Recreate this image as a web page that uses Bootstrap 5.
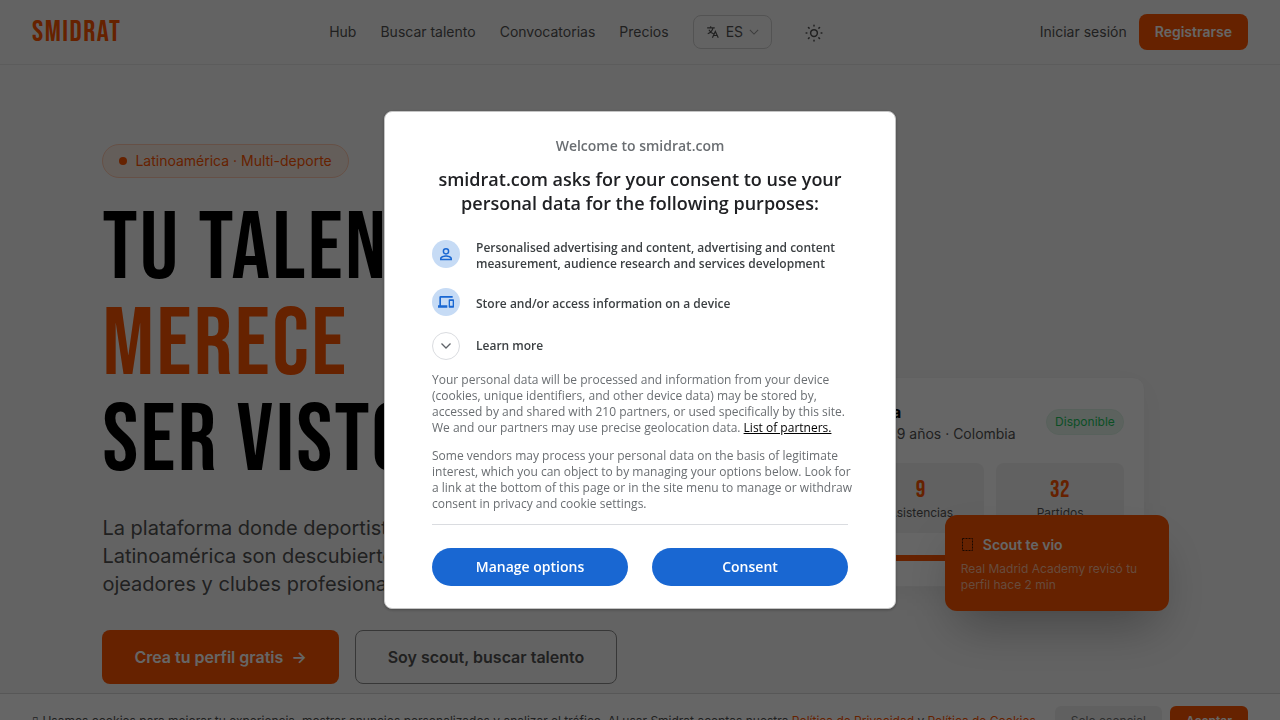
<!DOCTYPE html>
<html lang="es">
<head>
<meta charset="utf-8">
<meta name="viewport" content="width=device-width, initial-scale=1">
<title>Smidrat</title>
<link href="https://cdn.jsdelivr.net/npm/bootstrap@5.3.0/dist/css/bootstrap.min.css" rel="stylesheet">
<style>
:root { --accent: #ff5500; --ink: #525252; }
body { font-family: Inter, sans-serif; font-size: 14px; line-height: 20px; background: #f8f8f8; color: var(--ink); height: 100vh; overflow: hidden; }
a { text-decoration: none; }
.display-type { font-family: "Bebas Neue", "Roboto Condensed", "Liberation Sans Narrow", sans-serif; font-weight: 400; letter-spacing: .025em; }
.site-header { height: 65px; border-bottom: 1px solid #e5e5e5; }
.site-header a { color: var(--ink); }
.site-header .brand { color: var(--accent); font-size: 30px; line-height: 36px; letter-spacing: .05em; }
.btn-accent, .site-header .btn-accent { background: var(--accent); color: #fff; font-weight: 600; border: 0; border-radius: 8px; }
.btn-signup { height: 36px; padding: 8px 16px; font-size: 14px; line-height: 20px; }
.lang-btn { height: 34px; border: 1px solid #cfcfcf; border-radius: 8px; background: transparent; color: var(--ink); padding: 0 12px; gap: 6px; }
.theme-btn { width: 36px; height: 36px; border: 0; background: transparent; color: var(--ink); }
.hero { padding: 79px 8% 0; }
.hero-copy { padding-bottom: 136px; }
.tag-pill { height: 34px; padding: 0 16px; border: 1px solid #ffc9ae; border-radius: 17px; background: #faeae2; color: var(--accent); }
.tag-dot { width: 8px; height: 8px; border-radius: 50%; background: var(--accent); }
.hero h1 { font-size: 96px; line-height: 96px; color: #000; margin: 24px 0 0; white-space: nowrap; }
.hero h1 span { color: var(--accent); }
.hero-lead { font-size: 20px; line-height: 28px; max-width: 430px; margin: 24px 0 32px; }
.btn-hero { height: 54px; padding: 0 32px; font-size: 16px; font-weight: 600; border-radius: 8px; white-space: nowrap; }
.btn-scout { border: 1px solid #8a8a8a; color: var(--ink); background: transparent; }
.profile-card { width: 448px; background: #fff; border: 1px solid #f2f2f2; border-radius: 12px; padding: 20px 20px 25px; box-shadow: 0 8px 30px rgba(0,0,0,.05); }
.card-head { height: 48px; gap: 12px; margin-bottom: 17px; }
.avatar-disc { width: 48px; height: 48px; border-radius: 50%; background: #ffe0cf; }
.player-name { font-size: 16px; line-height: 24px; font-weight: 700; color: #000; }
.status-pill { font-size: 12px; line-height: 16px; color: #22c55e; background: #e6f5ec; border: 1px solid #dcf3e5; border-radius: 13px; padding: 4px 8px; }
.stat-row { gap: 12px; }
.stat-tile { flex: 1 1 0; background: #f2f2f2; border-radius: 8px; height: 70px; padding-top: 12px; font-size: 12px; line-height: 16px; }
.stat-tile strong { display: block; font-size: 24px; line-height: 30px; color: var(--accent); }
.profile-card .progress { height: 6px; margin-top: 22px; --bs-progress-bg: #eee; --bs-progress-bar-bg: #ff5500; }
.scout-note { right: -25px; bottom: -25px; width: 224px; height: 96px; padding: 20px 16px 16px; background: var(--accent); border-radius: 12px; color: #fff; box-shadow: 0 25px 50px -12px rgba(0,0,0,.3); }
.scout-note p { font-size: 12px; line-height: 16px; color: #ffbb99; margin: 6px 0 0; }
.cookie-bar { bottom: -28px; background: #fff; border-top: 1px solid #d9d9d9; padding: 12px 32px; font-size: 12px; line-height: 16px; color: var(--ink); white-space: nowrap; }
.cookie-bar a { color: var(--accent); }
.cookie-bar button { height: 30px; border: 0; border-radius: 6px; padding: 0 16px; font-size: 12px; }
.btn-essential { background: #f0f0f0; color: #737373; }
.scrim { background: rgba(0,0,0,.6); z-index: 1040; font-family: "Open Sans", sans-serif; }
.consent-box { width: 512px; background: #fff; border: 1px solid #c4c4c4; border-radius: 8px; padding: 24px 47px 22px; color: #3c4043; box-shadow: 0 1px 3px rgba(0,0,0,.3); }
.consent-site { font-size: 14px; line-height: 20px; font-weight: 600; color: #6a6e72; }
.consent-box h2 { font-size: 18px; line-height: 24px; font-weight: 600; color: #202124; margin: 11px 0 25px; }
.purpose { font-size: 12px; line-height: 16px; font-weight: 600; }
.purpose-icon { width: 28px; height: 28px; flex: none; border-radius: 50%; background: #c6dbf5; color: #1967d2; }
.more-btn { border: 0; background: transparent; padding: 0; color: inherit; }
.more-btn .purpose-icon { background: #fff; border: 1px solid #dadce0; color: #5f6368; }
.legal { font-size: 12px; line-height: 16px; color: #6a6e72; border-bottom: 1px solid #dadce0; margin-bottom: 23px; }
.legal p { margin-right: -8px; }
.legal a { color: #000; text-decoration: underline; }
.btn-consent { height: 38px; border: 0; border-radius: 19px; background: #1967d2; color: #fff; font-size: 14px; font-weight: 600; flex: 1; }
</style>
</head>
<body>
<header class="site-header d-flex align-items-center justify-content-between px-4">
  <a href="#" class="brand display-type ms-2">SMIDRAT</a>
  <nav class="d-flex align-items-center gap-4">
    <a href="#">Hub</a>
    <a href="#">Buscar talento</a>
    <a href="#">Convocatorias</a>
    <a href="#">Precios</a>
    <button type="button" class="lang-btn d-flex align-items-center">
      <svg width="14" height="14" viewBox="0 0 24 24" fill="none" stroke="currentColor" stroke-width="2" aria-hidden="true"><path d="M2 5h13M8 2v3M3 15C8 13 11 10 12 5M5 8c2 4 5 6 8 7M11 22l5-11 5 11M13 18h7"/></svg>
      ES
      <svg width="10" height="10" viewBox="0 0 12 12" fill="none" stroke="#999" stroke-width="1.3" aria-hidden="true"><path d="M1 3.5l5 5 5-5"/></svg>
    </button>
    <button type="button" class="theme-btn p-0" aria-label="Cambiar tema">
      <svg width="18" height="18" viewBox="0 0 24 24" fill="none" stroke="currentColor" stroke-width="2" stroke-linecap="round" aria-hidden="true"><circle cx="12" cy="12" r="4.5"/><path d="M12 1.5v1M12 21.5v1M1.5 12h1M21.5 12h1M4.600 4.600L5.500 5.500M18.500 18.500l.9.9M4.600 19.400l.9-.9M18.500 5.500l.9-.9"/></svg>
    </button>
  </nav>
  <div class="d-flex align-items-center me-2">
    <a href="#" class="me-2 pe-1">Iniciar sesión</a>
    <a href="#" class="btn-accent btn-signup">Registrarse</a>
  </div>
</header>

<main class="hero">
  <div class="row align-items-center gx-5">
    <section class="col-6 hero-copy">
      <div class="tag-pill d-inline-flex align-items-center gap-2"><span class="tag-dot"></span>Latinoamérica · Multi-deporte</div>
      <h1 class="display-type">TU TALENTO<br><span>MERECE</span><br>SER VISTO</h1>
      <p class="hero-lead">La plataforma donde deportistas de Latinoamérica son descubiertos por ojeadores y clubes profesionales.</p>
      <div class="d-flex gap-3">
        <button type="button" class="btn-accent btn-hero">Crea tu perfil gratis&nbsp; →</button>
        <button type="button" class="btn-hero btn-scout">Soy scout, buscar talento</button>
      </div>
    </section>
    <section class="col-6 d-flex justify-content-center">
      <div class="profile-card position-relative">
        <div class="card-head d-flex align-items-center">
          <span class="avatar-disc"></span>
          <div class="flex-grow-1">
            <div class="player-name">Santiago García</div>
            <div>Mediocampista · 19 años · Colombia</div>
          </div>
          <span class="status-pill">Disponible</span>
        </div>
        <div class="stat-row d-flex text-center">
          <div class="stat-tile"><strong class="display-type">14</strong>Goles</div>
          <div class="stat-tile"><strong class="display-type">9</strong>Asistencias</div>
          <div class="stat-tile"><strong class="display-type">32</strong>Partidos</div>
        </div>
        <div class="progress"><div class="progress-bar w-75"></div></div>
        <aside class="scout-note position-absolute">
          <div class="d-flex align-items-center fw-semibold">
            <svg class="me-2" width="14" height="16" viewBox="0 0 14 16" fill="none" stroke="#401500" aria-hidden="true"><rect x="1.5" y="1.5" width="10" height="12" stroke-dasharray="2 1"/></svg>Scout te vio
          </div>
          <p>Real Madrid Academy revisó tu perfil hace 2 min</p>
        </aside>
      </div>
    </section>
  </div>
</main>

<div class="cookie-bar position-fixed start-0 end-0 d-flex align-items-center">
  <div class="flex-grow-1">▯ Usamos cookies para mejorar tu experiencia, mostrar anuncios personalizados y analizar el tráfico. Al usar Smidrat aceptas nuestra <a href="#">Política de Privacidad</a> y <a href="#">Política de Cookies</a>.</div>
  <button type="button" class="btn-essential me-2">Solo esencial</button>
  <button type="button" class="btn-accent">Aceptar</button>
</div>

<div class="scrim position-fixed top-0 start-0 w-100 h-100 d-flex align-items-center justify-content-center">
  <div class="consent-box" role="dialog" aria-modal="true" aria-labelledby="consent-title">
    <div class="consent-site text-center">Welcome to smidrat.com</div>
    <h2 id="consent-title" class="text-center">smidrat.com asks for your consent to use your personal data for the following purposes:</h2>
    <div class="purpose d-flex gap-3 mb-3">
      <span class="purpose-icon d-flex align-items-center justify-content-center"><svg width="16" height="16" viewBox="0 0 24 24" fill="currentColor" aria-hidden="true"><path d="M12 3a5 5 0 1 0 0 10 5 5 0 0 0 0-10zm0 2.200a2.800 2.800 0 1 1 0 5.600 2.800 2.800 0 0 1 0-5.600zM12 14c-3.300 0-9 1.500-9 5v2.500h18V19c0-3.500-5.700-5-9-5zm0 2.200c3 0 6.500 1.400 6.800 3.100H5.200c.3-1.700 3.800-3.100 6.800-3.100z"/></svg></span>
      <div>Personalised advertising and content, advertising and content measurement, audience research and services development</div>
    </div>
    <div class="purpose d-flex gap-3 mb-3">
      <span class="purpose-icon d-flex align-items-center justify-content-center"><svg width="16" height="16" viewBox="0 0 24 24" fill="currentColor" aria-hidden="true"><path d="M4 5.500h18V3H4a2 2 0 0 0-2 2v12H0v3.500h14V17H4.500V5.500zM23 8h-6a1 1 0 0 0-1 1v10.500a1 1 0 0 0 1 1h6a1 1 0 0 0 1-1V9a1 1 0 0 0-1-1zm-1 9.500h-4v-7h4v7z"/></svg></span>
      <div class="pt-2">Store and/or access information on a device</div>
    </div>
    <button type="button" class="purpose more-btn d-flex align-items-center gap-3">
      <span class="purpose-icon d-flex align-items-center justify-content-center"><svg width="12" height="12" viewBox="0 0 12 12" fill="none" stroke="currentColor" stroke-width="1.300" aria-hidden="true"><path d="M1.500 3.500L6 8l4.500-4.500"/></svg></span>
      Learn more
    </button>
    <div class="legal mt-2 pt-1">
      <p class="mb-2 pb-1">Your personal data will be processed and information from your device (cookies, unique identifiers, and other device data) may be stored by, accessed by and shared with 210 partners, or used specifically by this site. We and our partners may use precise geolocation data. <a href="#">List of partners.</a></p>
      <p class="mb-2 pb-1">Some vendors may process your personal data on the basis of legitimate interest, which you can object to by managing your options below. Look for a link at the bottom of this page or in the site menu to manage or withdraw consent in privacy and cookie settings.</p>
    </div>
    <div class="d-flex gap-4">
      <button type="button" class="btn-consent">Manage options</button>
      <button type="button" class="btn-consent">Consent</button>
    </div>
  </div>
</div>
<script src="https://cdn.jsdelivr.net/npm/bootstrap@5.3.0/dist/js/bootstrap.bundle.min.js"></script>
</body>
</html>
